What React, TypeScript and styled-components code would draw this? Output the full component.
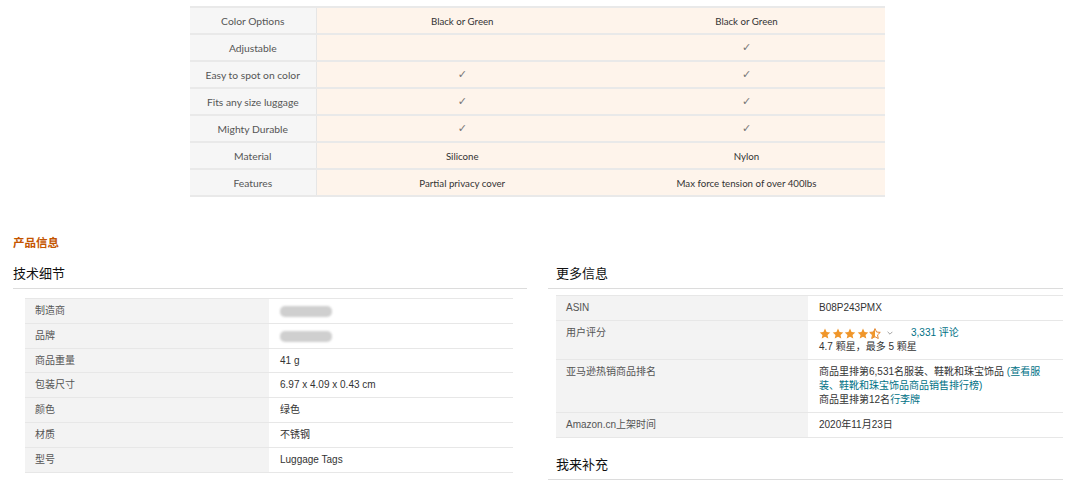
import React from 'react';
import styled, { createGlobalStyle } from 'styled-components';

const Global = createGlobalStyle`
  html, body { margin: 0; padding: 0; background: #fff; }
  body {
    width: 1080px;
    height: 482px;
    overflow: hidden;
    font-family: "Liberation Sans", "Noto Sans CJK SC", sans-serif;
  }
`;

const Page = styled.div`
  padding-top: 6px;
`;

const Compare = styled.table`
  margin-left: 190px;
  width: 695px;
  border-collapse: collapse;
  table-layout: fixed;
  font-family: Lato, "Noto Sans", "DejaVu Sans", sans-serif;
  border-top: 2px solid #e9e9e9;
`;

const CmpRow = styled.tr`
  border-bottom: 2px solid #e9e9e9;
`;

const CmpLabel = styled.th`
  height: 25px;
  padding: 0;
  background: #f6f6f6;
  color: #555;
  font-size: 10.3px;
  font-weight: normal;
  text-align: center;
  border-right: 1px solid #e6e6e6;
`;

const CmpCell = styled.td`
  height: 25px;
  padding: 0;
  background: #fef4eb;
  color: #333;
  font-size: 9.7px;
  text-align: center;
`;

const Check = styled.span`
  font-family: "DejaVu Sans", sans-serif;
  font-size: 11px;
  color: #777;
`;

const SectionTitle = styled.div`
  margin: 37px 0 0 13px;
  font-family: "Noto Sans CJK SC", sans-serif;
  font-size: 11.5px;
  font-weight: bold;
  line-height: 16px;
  color: #c45500;
`;

const Columns = styled.div`
  display: grid;
  grid-template-columns: 514px 515px;
  column-gap: 21px;
  padding-left: 13px;
  margin-top: 14px;
  align-items: start;
`;

const Column = styled.div`
  display: flex;
  flex-direction: column;
`;

const Heading = styled.h3<{ $indent?: number; $top?: number }>`
  margin: ${(p) => p.$top ?? 0}px 0 0 0;
  padding: 0 0 6px ${(p) => p.$indent ?? 0}px;
  font-family: "Noto Sans CJK SC", sans-serif;
  font-size: 13px;
  font-weight: normal;
  line-height: 18px;
  color: #111;
  border-bottom: 1px solid #dcdcdc;
`;

const Spec = styled.table<{ $left: number; $right: number; $top: number }>`
  margin: ${(p) => p.$top}px ${(p) => p.$right}px 0 ${(p) => p.$left}px;
  border-collapse: collapse;
  table-layout: fixed;
  font-size: 10px;
  line-height: 14px;
  border-top: 1px solid #e7e7e7;
`;

const SpecRow = styled.tr`
  border-bottom: 1px solid #e7e7e7;
`;

const SpecLabel = styled.th<{ $w: number; $pb?: number }>`
  width: ${(p) => p.$w}px;
  box-sizing: border-box;
  padding: 5px 10px ${(p) => p.$pb ?? 5}px 10px;
  background: #f3f3f3;
  color: #555;
  font-weight: normal;
  text-align: left;
  vertical-align: top;
`;

const SpecValue = styled.td<{ $pb?: number }>`
  padding: 5px 4px ${(p) => p.$pb ?? 5}px 11px;
  color: #333;
  vertical-align: top;
`;

const Blurred = styled.span`
  display: inline-block;
  width: 52px;
  height: 11px;
  border-radius: 5px;
  background: #cfcfcf;
  filter: blur(1px);
  vertical-align: middle;
`;

const Link = styled.span`
  color: #007185;
`;

const RatingLine = styled.div`
  display: flex;
  align-items: center;
`;

const Stars = styled.span`
  display: inline-flex;
  gap: 0.5px;
`;

const Caret = styled.span`
  display: inline-flex;
  margin: 0 18px 0 6px;
`;

const STAR = 'M6 0.6l1.55 3.4 3.7.4-2.75 2.5.8 3.65L6 8.7 2.7 10.55l.8-3.65L.75 4.4l3.7-.4z';

const Star: React.FC<{ half?: boolean }> = ({ half }) => (
  <svg width="12" height="11" viewBox="0 0 12 11">
    {half ? (
      <>
        <defs>
          <clipPath id="halfclip">
            <rect x="0" y="0" width="6" height="11" />
          </clipPath>
        </defs>
        <path d={STAR} fill="none" stroke="#de7921" strokeWidth="0.9" strokeLinejoin="round" />
        <path d={STAR} fill="#f0962a" clipPath="url(#halfclip)" />
      </>
    ) : (
      <path d={STAR} fill="#f0962a" />
    )}
  </svg>
);

const compare: [string, React.ReactNode, React.ReactNode][] = [
  ['Color Options', 'Black or Green', 'Black or Green'],
  ['Adjustable', '', <Check>✓</Check>],
  ['Easy to spot on color', <Check>✓</Check>, <Check>✓</Check>],
  ['Fits any size luggage', <Check>✓</Check>, <Check>✓</Check>],
  ['Mighty Durable', <Check>✓</Check>, <Check>✓</Check>],
  ['Material', 'Silicone', 'Nylon'],
  ['Features', 'Partial privacy cover', 'Max force tension of over 400lbs'],
];

const tech: [string, React.ReactNode][] = [
  ['制造商', <Blurred />],
  ['品牌', <Blurred />],
  ['商品重量', '41 g'],
  ['包装尺寸', '6.97 x 4.09 x 0.43 cm'],
  ['颜色', '绿色'],
  ['材质', '不锈钢'],
  ['型号', 'Luggage Tags'],
];

export default function App() {
  return (
    <Page>
      <Global />
      <Compare>
        <colgroup>
          <col style={{ width: 126 }} />
          <col style={{ width: 292 }} />
          <col style={{ width: 277 }} />
        </colgroup>
        <tbody>
          {compare.map(([label, a, b], i) => (
            <CmpRow key={i}>
              <CmpLabel>{label}</CmpLabel>
              <CmpCell>{a}</CmpCell>
              <CmpCell>{b}</CmpCell>
            </CmpRow>
          ))}
        </tbody>
      </Compare>

      <SectionTitle>产品信息</SectionTitle>

      <Columns>
        <Column>
          <Heading>技术细节</Heading>
          <Spec $left={12} $right={14} $top={9}>
            <tbody>
              {tech.map(([k, v], i) => (
                <SpecRow key={i}>
                  <SpecLabel $w={244} $pb={4.8}>{k}</SpecLabel>
                  <SpecValue $pb={4.8}>{v}</SpecValue>
                </SpecRow>
              ))}
            </tbody>
          </Spec>
        </Column>

        <Column>
          <Heading $indent={8}>更多信息</Heading>
          <Spec $left={8} $right={0} $top={6}>
            <tbody>
              <SpecRow>
                <SpecLabel $w={252}>ASIN</SpecLabel>
                <SpecValue>B08P243PMX</SpecValue>
              </SpecRow>
              <SpecRow>
                <SpecLabel $w={252}>用户评分</SpecLabel>
                <SpecValue>
                  <RatingLine>
                    <Stars>
                      <Star />
                      <Star />
                      <Star />
                      <Star />
                      <Star half />
                    </Stars>
                    <Caret>
                      <svg width="6" height="4" viewBox="0 0 6 4">
                        <path d="M0.6 0.8L3 3.2 5.4 0.8" fill="none" stroke="#999" strokeWidth="0.9" />
                      </svg>
                    </Caret>
                    <Link>3,331 评论</Link>
                  </RatingLine>
                  <div>4.7 颗星，最多 5 颗星</div>
                </SpecValue>
              </SpecRow>
              <SpecRow>
                <SpecLabel $w={252}>亚马逊热销商品排名</SpecLabel>
                <SpecValue>
                  <div>
                    商品里排第6,531名服装、鞋靴和珠宝饰品 <Link>(查看服装、鞋靴和珠宝饰品商品销售排行榜)</Link>
                  </div>
                  <div>
                    商品里排第12名<Link>行李牌</Link>
                  </div>
                </SpecValue>
              </SpecRow>
              <SpecRow>
                <SpecLabel $w={252}>Amazon.cn上架时间</SpecLabel>
                <SpecValue>2020年11月23日</SpecValue>
              </SpecRow>
            </tbody>
          </Spec>
          <Heading $indent={8} $top={17}>我来补充</Heading>
        </Column>
      </Columns>
    </Page>
  );
}
